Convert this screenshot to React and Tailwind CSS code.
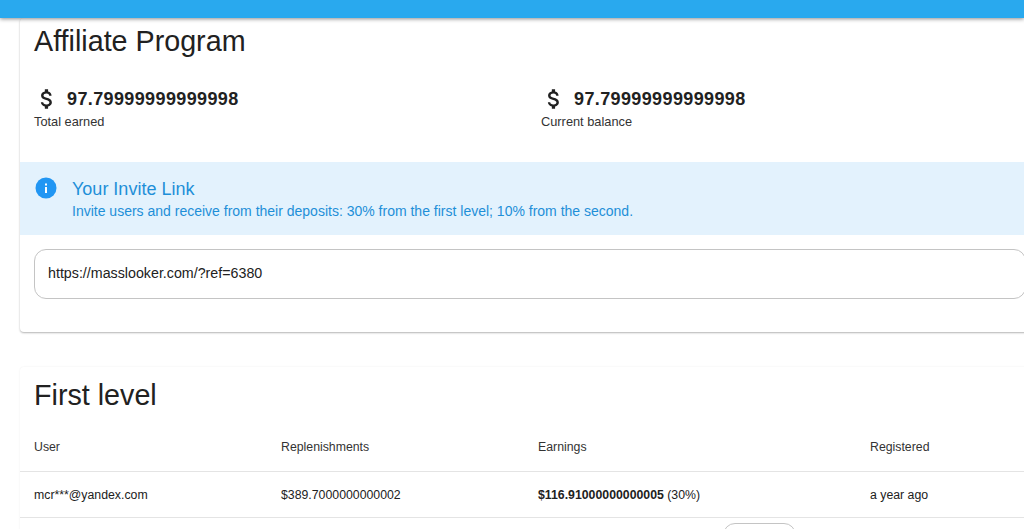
import React from 'react';

const DollarIcon = () => (
  <svg viewBox="0 0 24 24" className="w-[26px] h-[26px] shrink-0 fill-[#212121]">
    <path d="M11.8 10.9c-2.27-.59-3-1.2-3-2.15 0-1.09 1.01-1.85 2.7-1.85 1.78 0 2.44.85 2.5 2.1h2.21c-.07-1.72-1.12-3.3-3.21-3.81V3h-3v2.16c-1.94.42-3.5 1.68-3.5 3.61 0 2.31 1.91 3.46 4.7 4.13 2.5.6 3 1.48 3 2.41 0 .69-.49 1.79-2.7 1.79-2.06 0-2.87-.92-2.98-2.1h-2.2c.12 2.19 1.76 3.42 3.68 3.83V21h3v-2.15c1.95-.37 3.5-1.5 3.5-3.55 0-2.84-2.43-3.81-4.7-4.4z" />
  </svg>
);

const InfoIcon = () => (
  <svg viewBox="0 0 22 22" className="w-[22px] h-[22px] shrink-0">
    <circle cx="11" cy="11" r="10.5" fill="#2196f3" />
    <rect x="10" y="10" width="2" height="6" fill="#fff" />
    <rect x="10" y="6.5" width="2" height="2" fill="#fff" />
  </svg>
);

const Stat = ({ value, label }) => (
  <div>
    <div className="flex items-center h-[26px]">
      <DollarIcon />
      <span className="ml-[7px] text-[18px] font-bold tracking-[0.38px] text-[#212121]">{value}</span>
    </div>
    <div className="mt-[1px] text-[12.8px] leading-[18px] text-[#333]">{label}</div>
  </div>
);

export default function App() {
  return (
    <div
      className="h-[529px] overflow-hidden bg-white relative"
      style={{ fontFamily: '"Liberation Sans", Arial, sans-serif' }}
    >
      {/* Top bar */}
      <div className="relative z-10 h-[18px] bg-[#29a9ee] shadow-[0_1px_4px_rgba(0,0,0,0.45)]" />

      <div className="ml-[20px] w-[1020px]">
        {/* Affiliate card */}
        <div className="h-[314px] rounded-[4px] bg-white shadow-[0_1px_2px_rgba(0,0,0,0.3)]">
          <div className="px-[14px] pt-[5px] text-[28.7px] leading-[36px] text-[#212121]">Affiliate Program</div>

          <div className="flex mt-[27px] px-[14px]">
            <div className="w-[507px] shrink-0"><Stat value="97.79999999999998" label="Total earned" /></div>
            <Stat value="97.79999999999998" label="Current balance" />
          </div>

          <div className="mt-[31px] h-[73px] bg-[#e3f2fd] flex items-start pl-[15px] pt-[15px]">
            <InfoIcon />
            <div className="ml-[15px] text-[#1e8fd8]">
              <div className="text-[18px] leading-[24px]">Your Invite Link</div>
              <div className="text-[14px] leading-[20px]">
                Invite users and receive from their deposits: 30% from the first level; 10% from the second.
              </div>
            </div>
          </div>

          <div className="mt-[14px] mx-[14px] h-[50px] rounded-[12px] border border-[#c4c4c4] flex items-center pl-[13px] text-[14.25px] text-[#212121]">
            https://masslooker.com/?ref=6380
          </div>
        </div>

        {/* First level card */}
        <div className="mt-[35px] rounded-[4px] bg-white shadow-[0_0_2px_rgba(0,0,0,0.08)]">
          <div className="px-[14px] pt-[10px] text-[28.7px] leading-[36px] text-[#212121]">First level</div>

          <table className="mt-[11px] w-full table-fixed text-[12.3px] text-[#212121]">
            <tbody>
              <tr className="h-[47px] border-b border-[#e4e4e4] text-[#333]">
                <td className="w-[261px] pl-[14px]">User</td>
                <td className="w-[257px]">Replenishments</td>
                <td className="w-[332px]">Earnings</td>
                <td>Registered</td>
              </tr>
              <tr className="h-[46px] border-b border-[#e4e4e4]">
                <td className="pl-[14px] pt-[2px]">mcr***@yandex.com</td>
                <td className="pt-[2px]">$389.7000000000002</td>
                <td className="pt-[2px]"><b>$116.91000000000005</b> (30%)</td>
                <td className="pt-[2px]">a year ago</td>
              </tr>
            </tbody>
          </table>

          <div className="pl-[703px] pt-[5px]">
            <div className="w-[73px] h-[30px] rounded-[12px] border border-[#c4c4c4]" />
          </div>
        </div>
      </div>
    </div>
  );
}
